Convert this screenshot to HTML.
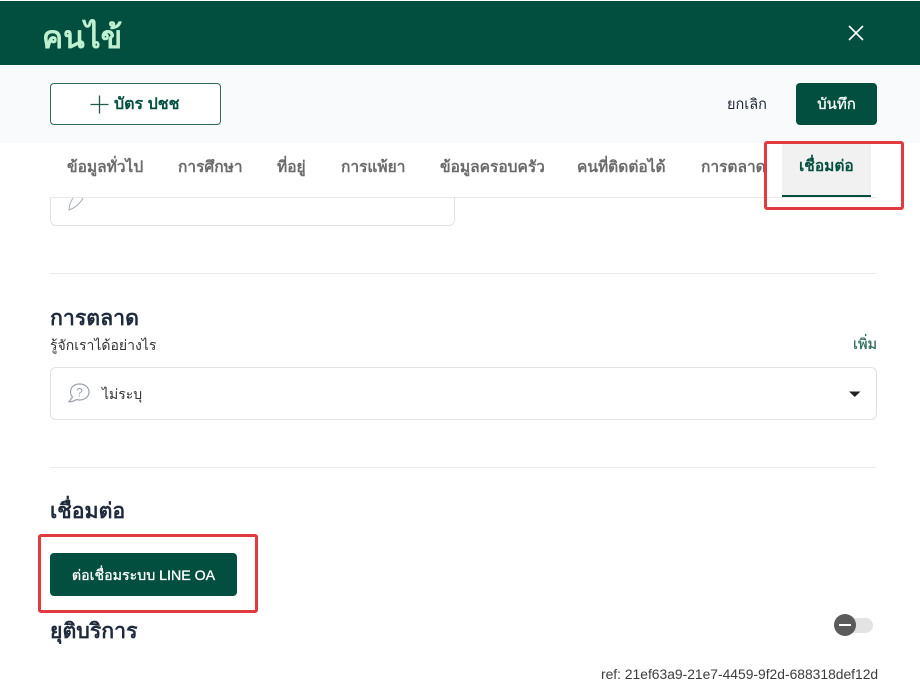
<!DOCTYPE html>
<html lang="th"><head><meta charset="utf-8"><style>
html,body{margin:0;padding:0;width:920px;height:682px;overflow:hidden;background:#fff;font-family:"Liberation Sans","Noto Sans CJK SC",sans-serif;color:#1d2433}
.a{position:absolute;white-space:nowrap;line-height:20px}
.tab{position:absolute;top:158px;font-size:15.5px;font-weight:700;color:#6b6b6b;line-height:20px;white-space:nowrap}
.h{position:absolute;font-size:21.3px;font-weight:700;color:#1f2a3c;line-height:24px;white-space:nowrap}
.red{position:absolute;border:3px solid #e23b3f;border-radius:3px;box-sizing:border-box}
</style></head><body>
<div style="position:absolute;left:0;top:1px;width:920px;height:64px;background:#034f3f"></div>
<div class="a" style="left:42px;top:17px;font-size:31.6px;line-height:40px;font-weight:700;color:#bff0d0">คนไข้</div>
<svg style="position:absolute;left:848px;top:25px" width="16" height="16" viewBox="0 0 16 16"><path d="M1 1L15 15M15 1L1 15" stroke="#fff" stroke-width="1.6" fill="none"/></svg>
<div style="position:absolute;left:0;top:65px;width:920px;height:78px;background:#f8fafb"></div>
<div style="position:absolute;left:50px;top:83px;width:171px;height:42px;box-sizing:border-box;border:1px solid #2d6a5a;border-radius:4px;background:#fff"></div>
<svg style="position:absolute;left:90px;top:95px" width="19" height="19" viewBox="0 0 19 19"><path d="M0.5 9.5H18.5M9.500 0.500V18.500" stroke="#1f5c4c" stroke-width="1.3" fill="none"/></svg>
<div class="a" style="left:114px;top:95px;font-size:16px;font-weight:700;color:#034f3f">บัตร ปชช</div>
<div class="a" style="left:727px;top:95px;font-size:14.5px;color:#1d2433">ยกเลิก</div>
<div style="position:absolute;left:796px;top:83px;width:81px;height:42px;background:#034f3f;border-radius:4px"></div>
<div class="a" style="left:796px;top:95px;width:81px;text-align:center;font-size:15px;color:#fff;-webkit-text-stroke:.25px #fff">บันทึก</div>
<div class="tab" style="left:67px">ข้อมูลทั่วไป</div>
<div class="tab" style="left:178px">การศึกษา</div>
<div class="tab" style="left:277px">ที่อยู่</div>
<div class="tab" style="left:341px">การแพ้ยา</div>
<div class="tab" style="left:440px">ข้อมูลครอบครัว</div>
<div class="tab" style="left:577px">คนที่ติดต่อได้</div>
<div class="tab" style="left:701px">การตลาด</div>
<div style="position:absolute;left:782px;top:143px;width:89px;height:53px;background:#f1f1f1"></div>
<div class="tab" style="left:799px;top:157px;color:#034f3f">เชื่อมต่อ</div>
<div style="position:absolute;left:50px;top:197px;width:827px;height:1px;background:#e6e8ea"></div>
<div style="position:absolute;left:782px;top:195px;width:89px;height:2px;background:#034f3f"></div>
<div style="position:absolute;left:50px;top:198px;width:405px;height:28px;box-sizing:border-box;border:1px solid #dfe1e4;border-top:0;border-radius:0 0 6px 6px"></div>
<svg style="position:absolute;left:67px;top:197px" width="18" height="14" viewBox="0 0 18 14"><path d="M16 1C14 5 10 10 2 13C2.500 9 3 5 6 1" stroke="#a9afb8" stroke-width="1" fill="none"/></svg>
<div style="position:absolute;left:50px;top:273px;width:827px;height:1px;background:#ececec"></div>
<div class="h" style="left:50px;top:306px">การตลาด</div>
<div class="a" style="left:50px;top:335px;font-size:14px;color:#333">รู้จักเราได้อย่างไร</div>
<div class="a" style="left:853px;top:335px;font-size:14.5px;color:#2d6a5a;-webkit-text-stroke:.25px #2d6a5a">เพิ่ม</div>
<div style="position:absolute;left:50px;top:367px;width:827px;height:53px;box-sizing:border-box;border:1px solid #dfe1e4;border-radius:6px"></div>
<svg style="position:absolute;left:68px;top:383px" width="22" height="21" viewBox="0 0 22 21"><path d="M11.500 1C6 1 2.500 4.500 2.500 9C2.500 11 3.200 12.700 4.500 14L1 18.800C3.800 18.800 6.500 18 8.500 16.500C9.400 16.800 10.400 17 11.500 17C17 17 21 13.500 21 9C21 4.500 17 1 11.500 1Z" stroke="#9aa1ab" stroke-width="1.200" fill="none"/><text x="11.500" y="13.500" font-size="12" text-anchor="middle" fill="#9aa1ab" font-family="Liberation Sans">?</text></svg>
<div class="a" style="left:102px;top:384px;font-size:14px;color:#333">ไม่ระบุ</div>
<svg style="position:absolute;left:849px;top:391px" width="12" height="7" viewBox="0 0 12 7"><path d="M0 0.500H11.500L5.800 6Z" fill="#222"/></svg>
<div style="position:absolute;left:50px;top:467px;width:827px;height:1px;background:#ececec"></div>
<div class="h" style="left:50px;top:499px">เชื่อมต่อ</div>
<div style="position:absolute;left:50px;top:553px;width:187px;height:43px;background:#034f3f;border-radius:4px"></div>
<div class="a" style="left:50px;top:566px;width:187px;text-align:center;font-size:14.2px;color:#fff;-webkit-text-stroke:.3px #fff">ต่อเชื่อมระบบ LINE OA</div>
<div class="h" style="left:50px;top:619px">ยุติบริการ</div>
<div style="position:absolute;left:838px;top:618px;width:35px;height:15px;background:#e3e3e3;border-radius:8px"></div>
<div style="position:absolute;left:834px;top:614px;width:22px;height:22px;background:#5b5b5b;border-radius:50%"></div>
<div style="position:absolute;left:839px;top:624px;width:12px;height:2px;background:#fff"></div>
<div class="a" style="left:601px;top:664px;font-size:13.85px;color:#3c3c3c">ref: 21ef63a9-21e7-4459-9f2d-688318def12d</div>
<div class="red" style="left:764px;top:141px;width:140px;height:69px"></div>
<div class="red" style="left:38px;top:534px;width:220px;height:79px"></div>
</body></html>
